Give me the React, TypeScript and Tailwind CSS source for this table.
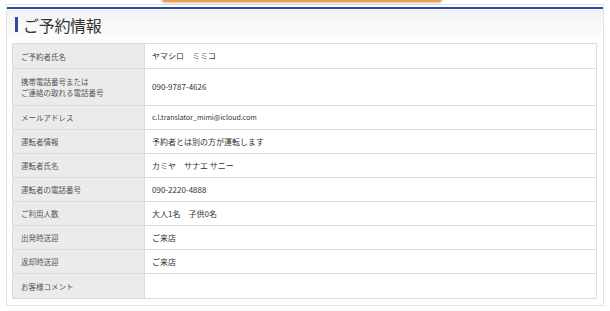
import React from 'react';

const rows: { label: string[]; value: string; small?: boolean }[] = [
  { label: ['ご予約者氏名'], value: 'ヤマシロ　ミミコ' },
  { label: ['携帯電話番号または', 'ご連絡の取れる電話番号'], value: '090-9787-4626' },
  { label: ['メールアドレス'], value: 'c.l.translator_mimi@icloud.com', small: true },
  { label: ['運転者情報'], value: '予約者とは別の方が運転します' },
  { label: ['運転者氏名'], value: 'カミヤ　サナエ サニー' },
  { label: ['運転者の電話番号'], value: '090-2220-4888' },
  { label: ['ご利用人数'], value: '大人1名　子供0名' },
  { label: ['出発時送迎'], value: 'ご来店' },
  { label: ['返却時送迎'], value: 'ご来店' },
  { label: ['お客様コメント'], value: '' },
];

export default function App() {
  return (
    <div
      className="relative w-[610px] h-[311px] overflow-hidden bg-white"
      style={{ fontFamily: '"Noto Sans CJK JP", "Noto Sans", sans-serif' }}
    >
      {/* orange button edge peeking in at the top */}
      <div className="absolute left-[162px] top-[-6px] w-[280px] h-[8px] rounded-b-[3px] bg-[#f0a04e] shadow-[0_1px_3px_rgba(0,0,0,0.25)]" />

      <div className="mx-[6px] mt-[4px] border border-[#e2e2e2] bg-white pt-[2px] pb-[6px]">
        <div className="h-[2px] bg-[#2f4aa6]" />
        <div className="flex h-[34px] items-center bg-gradient-to-b from-[#f1f1f1] to-white pb-[3px] pl-[8px]">
          <div className="h-[15px] w-[3px] bg-[#2f4aa6]" />
          <h2 className="ml-[5px] text-[16px] leading-none tracking-[-0.3px] text-[#333]">ご予約情報</h2>
        </div>

        <div className="ml-[5px] mr-[6px] border border-[#dcdcdc]">
          {rows.map((r, i) => (
            <div
              key={i}
              className={`flex ${i > 0 ? 'border-t border-[#dcdcdc]' : ''} ${
                r.label.length > 1 ? 'h-[37px]' : i === rows.length - 1 ? 'h-[25px]' : 'h-[24px]'
              }`}
            >
              <div className="flex w-[132px] shrink-0 flex-col justify-center border-r border-[#dcdcdc] bg-[#ebebeb] pl-[8px] text-[7.5px] leading-[11px] text-[#555]">
                {r.label.map((l) => (
                  <span key={l}>{l}</span>
                ))}
              </div>
              <div
                className={`flex flex-1 items-center pl-[7px] text-[#333] ${r.small ? 'text-[7px]' : 'text-[8px]'}`}
              >
                {r.value}
              </div>
            </div>
          ))}
        </div>
      </div>
    </div>
  );
}
